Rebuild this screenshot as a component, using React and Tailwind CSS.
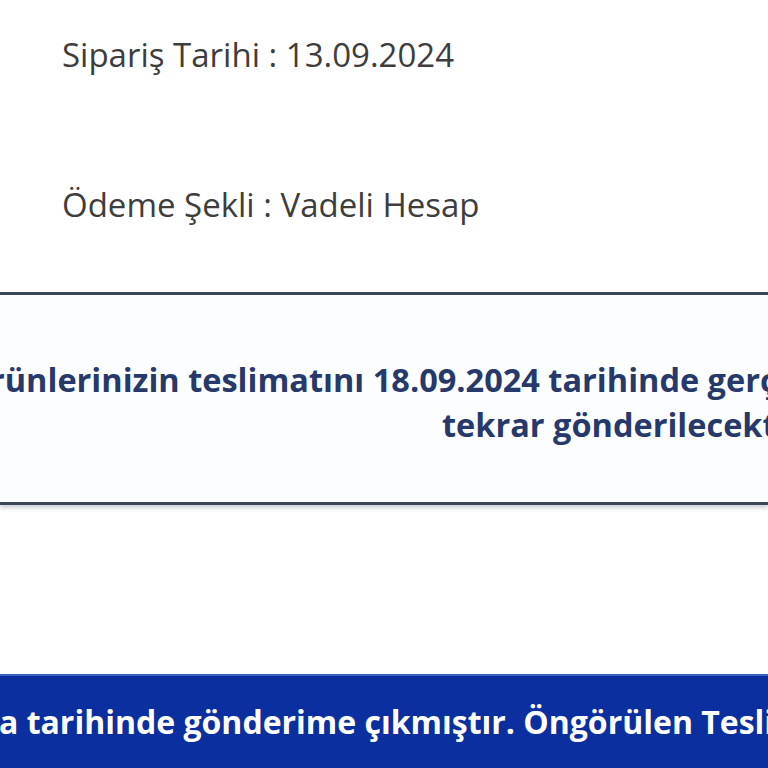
import React from 'react';

const App = () => {
    return (
        <div
            className="w-[768px] h-[768px] overflow-hidden bg-white flex flex-col"
            style={{ fontFamily: '"Open Sans", "Noto Sans", sans-serif' }}
        >
            {/* Order info */}
            <div className="h-[292px] pl-[62px] pt-[35px] text-[33px] leading-[40px] text-[#3d3d3d] whitespace-nowrap">
                <p>Sipariş Tarihi : 13.09.2024</p>
                <p className="mt-[110px]">Ödeme Şekli : Vadeli Hesap</p>
            </div>

            {/* Delivery notice box */}
            <div className="h-[213px] border-y-[3px] border-[#3b4656] bg-[#fbfdff] shadow-[0_3px_4px_rgba(60,70,110,0.25)] pt-[62px] text-[32.5px] leading-[45px] font-bold text-[#27396b] whitespace-nowrap">
                <p className="-ml-[10px]">rünlerinizin teslimatını 18.09.2024 tarihinde gerçekleştirilemedi.</p>
                <p className="pl-[442px]">tekrar gönderilecektir.</p>
            </div>

            {/* Shipment bar */}
            <div className="mt-[169px] flex-1 bg-[#0b2f9f] border-t-2 border-[#3b63c4] flex items-center text-[32px] font-bold text-white whitespace-nowrap">
                <p className="-ml-[1px]">a tarihinde gönderime çıkmıştır. Öngörülen Teslimat Tarihi</p>
            </div>
        </div>
    );
};

export default App;
